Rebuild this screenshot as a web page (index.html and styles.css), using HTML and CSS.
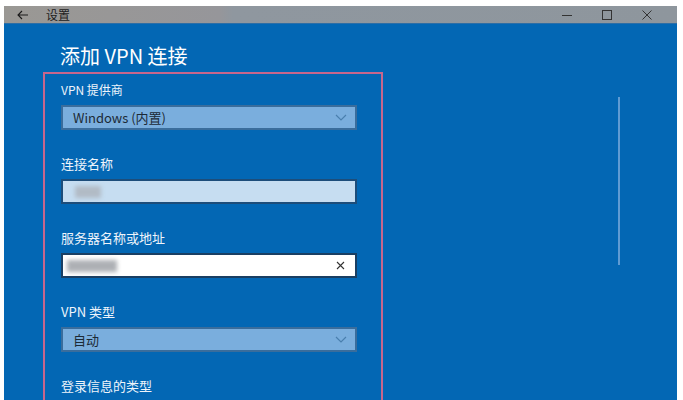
FILE: index.html
```html
<!DOCTYPE html>
<html lang="zh-CN">
<head>
  <meta charset="UTF-8" />
  <meta name="viewport" content="width=device-width, initial-scale=1.0"/>
  <title>设置</title>
  <link rel="stylesheet" href="styles.css">
</head>
<body>
  <div class="window">
    <!-- Title bar -->
    <div class="titlebar">
      <span class="back">
        <svg width="12" height="10" viewBox="0 0 12 10"><path d="M5 1 L1 5 L5 9 M1 5 H11" fill="none" stroke="#1a1a1a" stroke-width="1.1"/></svg>
      </span>
      <span class="title">设置</span>
      <div class="controls">
        <span class="ctl"><svg width="10" height="10" viewBox="0 0 10 10"><path d="M0 5.5 H10" stroke="#333" stroke-width="1"/></svg></span>
        <span class="ctl"><svg width="10" height="10" viewBox="0 0 10 10"><rect x="0.5" y="0.5" width="9" height="9" fill="none" stroke="#333" stroke-width="1"/></svg></span>
        <span class="ctl"><svg width="10" height="10" viewBox="0 0 10 10"><path d="M0.5 0.5 L9.5 9.5 M9.5 0.5 L0.5 9.5" stroke="#333" stroke-width="1"/></svg></span>
      </div>
    </div>

    <!-- Content -->
    <div class="content">
      <h1>添加 VPN 连接</h1>
      <div class="highlight">
        <div class="field">
          <label>VPN 提供商</label>
          <div class="select">
            <span>Windows (内置)</span>
            <svg class="chev" width="12" height="7" viewBox="0 0 12 7"><path d="M1 1 L6 6 L11 1" fill="none" stroke="#4a7fae" stroke-width="1.2"/></svg>
          </div>
        </div>

        <div class="field">
          <label>连接名称</label>
          <div class="input filled">
            <span class="smudge short"></span>
          </div>
        </div>

        <div class="field">
          <label>服务器名称或地址</label>
          <div class="input active">
            <span class="smudge long"></span>
            <svg class="clear" width="9" height="9" viewBox="0 0 9 9"><path d="M1 1 L8 8 M8 1 L1 8" stroke="#333" stroke-width="1.1"/></svg>
          </div>
        </div>

        <div class="field">
          <label>VPN 类型</label>
          <div class="select">
            <span>自动</span>
            <svg class="chev" width="12" height="7" viewBox="0 0 12 7"><path d="M1 1 L6 6 L11 1" fill="none" stroke="#4a7fae" stroke-width="1.2"/></svg>
          </div>
        </div>

        <div class="field">
          <label>登录信息的类型</label>
        </div>
      </div>
      <div class="scrollbar"></div>
    </div>
  </div>
</body>
</html>
```

FILE: styles.css
```css
html, body {
  margin: 0;
  height: 400px;
  overflow: hidden;
  background: #ffffff;
  font-family: "Noto Sans CJK SC", "Noto Sans", sans-serif;
}
.window {
  margin: 6px 6px 0 4px;
  height: 394px;
  display: flex;
  flex-direction: column;
  overflow: hidden;
  background: #0367b4;
}
.titlebar {
  flex: none;
  height: 17px;
  display: flex;
  align-items: center;
  background: linear-gradient(90deg, #9a9894 0%, #96969a 32%, #8f979f 34%, #8e969d 100%);
  border-bottom: 1px solid #2d6ea6;
  font-size: 12px;
  color: #1d1d1d;
}
.back {
  width: 14px;
  margin-left: 13px;
  display: flex;
  align-items: center;
}
.title {
  margin-left: 15px;
  line-height: 17px;
}
.controls {
  margin-left: auto;
  display: flex;
  margin-right: 10px;
}
.ctl {
  width: 40px;
  display: flex;
  justify-content: center;
  align-items: center;
}
.content {
  flex: 1;
  min-height: 0;
  overflow: hidden;
  position: relative;
  padding: 17px 0 0 39px;
}
h1 {
  margin: 0 0 1px 17px;
  font-size: 20px;
  font-weight: 400;
  line-height: 30px;
  color: #ffffff;
}
.highlight {
  width: 296px;
  border: 2px solid #c8668c;
  border-bottom: none;
  padding: 7px 24px 4px 16px;
}
.field + .field {
  margin-top: 25px;
}
label {
  display: block;
  font-size: 13px;
  line-height: 18px;
  color: #eef4fb;
  margin-bottom: 6px;
}
.field:first-child label {
  font-size: 12px;
}
.select, .input {
  box-sizing: border-box;
  height: 25px;
  display: flex;
  align-items: center;
  padding: 0 10px;
  font-size: 13px;
  color: #1c2a36;
  border: 2px solid #2c5f8e;
}
.select {
  background: #7aaedd;
  border-color: #3a6d9c;
}
.chev {
  margin-left: auto;
  margin-right: -2px;
}
.input.filled {
  background: #c6ddf1;
  border-color: #1d4d7a;
}
.input.active {
  background: #ffffff;
  border-color: #1a3f63;
}
.smudge {
  height: 12px;
  background: #a9adb3;
  filter: blur(2px);
  opacity: 0.7;
}
.smudge.short {
  width: 26px;
  margin-left: 2px;
}
.smudge.long {
  width: 50px;
  margin-left: -6px;
  background: #8b8f95;
}
.clear {
  margin-left: auto;
  margin-right: 0;
}
.scrollbar {
  position: absolute;
  left: 614px;
  top: 73px;
  width: 2px;
  height: 168px;
  background: #5f9bd3;
}
```
